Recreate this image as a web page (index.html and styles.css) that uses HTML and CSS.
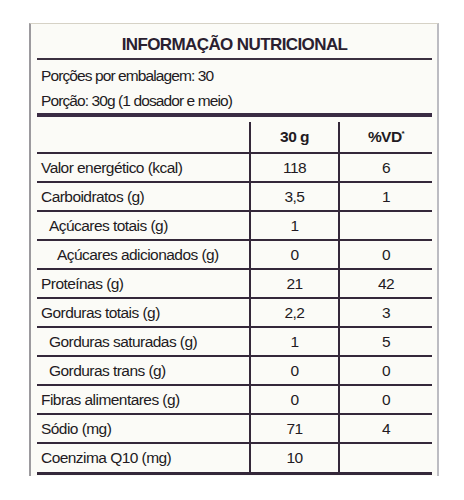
FILE: index.html
```html
<!DOCTYPE html>
<html lang="pt-BR">
<head>
<meta charset="utf-8">
<title>Informação Nutricional</title>
<link rel="stylesheet" href="styles.css">
</head>
<body>
<div class="label">
  <h1 class="title">INFORMAÇÃO NUTRICIONAL</h1>
  <div class="serving">
    <p>Porções por embalagem: 30</p>
    <p>Porção: 30g (1 dosador e meio)</p>
  </div>
  <div class="table">
    <div class="row head">
      <div class="cell name"></div>
      <div class="cell val">30 g</div>
      <div class="cell val">%VD<sup>*</sup></div>
    </div>
    <div class="row">
      <div class="cell name">Valor energético (kcal)</div>
      <div class="cell val">118</div>
      <div class="cell val">6</div>
    </div>
    <div class="row">
      <div class="cell name">Carboidratos (g)</div>
      <div class="cell val">3,5</div>
      <div class="cell val">1</div>
    </div>
    <div class="row">
      <div class="cell name ind1">Açúcares totais (g)</div>
      <div class="cell val">1</div>
      <div class="cell val"></div>
    </div>
    <div class="row">
      <div class="cell name ind2">Açúcares adicionados (g)</div>
      <div class="cell val">0</div>
      <div class="cell val">0</div>
    </div>
    <div class="row">
      <div class="cell name">Proteínas (g)</div>
      <div class="cell val">21</div>
      <div class="cell val">42</div>
    </div>
    <div class="row">
      <div class="cell name">Gorduras totais (g)</div>
      <div class="cell val">2,2</div>
      <div class="cell val">3</div>
    </div>
    <div class="row">
      <div class="cell name ind1">Gorduras saturadas (g)</div>
      <div class="cell val">1</div>
      <div class="cell val">5</div>
    </div>
    <div class="row">
      <div class="cell name ind1">Gorduras trans (g)</div>
      <div class="cell val">0</div>
      <div class="cell val">0</div>
    </div>
    <div class="row">
      <div class="cell name">Fibras alimentares (g)</div>
      <div class="cell val">0</div>
      <div class="cell val">0</div>
    </div>
    <div class="row">
      <div class="cell name">Sódio (mg)</div>
      <div class="cell val">71</div>
      <div class="cell val">4</div>
    </div>
    <div class="row last">
      <div class="cell name">Coenzima Q10 (mg)</div>
      <div class="cell val">10</div>
      <div class="cell val"></div>
    </div>
  </div>
</div>
</body>
</html>
```

FILE: styles.css
```css
html, body {
  margin: 0;
  padding: 0;
  background: #ffffff;
}

body {
  font-family: "Liberation Sans", Arial, Helvetica, sans-serif;
  color: #221a22;
}

.label {
  margin: 23px 0 0 29px;
  width: 410px;
  box-sizing: border-box;
  background: #fbfbf7;
  border-top: 1px solid #d6d2c6;
  border-left: 2px solid #9c9a9e;
  border-right: 2px solid #bcbcc2;
  padding: 0 5px 1px 6px;
}

.title {
  margin: 0;
  padding: 10px 0 2px;
  font-size: 17px;
  line-height: 22px;
  font-weight: bold;
  letter-spacing: -0.6px;
  text-align: center;
  color: #2a2030;
  border-bottom: 2px solid #3b3040;
}

.serving {
  padding: 4px 0 0 4px;
  border-bottom: 4px solid #3a2c44;
}

.serving p {
  margin: 0;
  font-size: 15.5px;
  line-height: 24.5px;
  letter-spacing: -0.9px;
}

.table {
  margin-top: 5px;
}

.row {
  display: grid;
  grid-template-columns: 212px 89px 94px;
  height: 27px;
  border-bottom: 2px solid #34283a;
  font-size: 15.5px;
  letter-spacing: -0.55px;
}

.row.head {
  height: 30px;
  font-weight: bold;
}

.row.last {
  height: 28px;
  border-bottom-width: 3px;
}

.cell {
  display: flex;
  align-items: center;
}

.cell.name {
  padding-left: 4px;
}

.cell.name.ind1 {
  padding-left: 12px;
}

.cell.name.ind2 {
  padding-left: 20px;
}

.cell.val {
  justify-content: center;
  border-left: 2px solid #34283a;
}

sup {
  font-size: 8px;
  line-height: 0;
  align-self: flex-start;
  margin-top: 12px;
}
```
